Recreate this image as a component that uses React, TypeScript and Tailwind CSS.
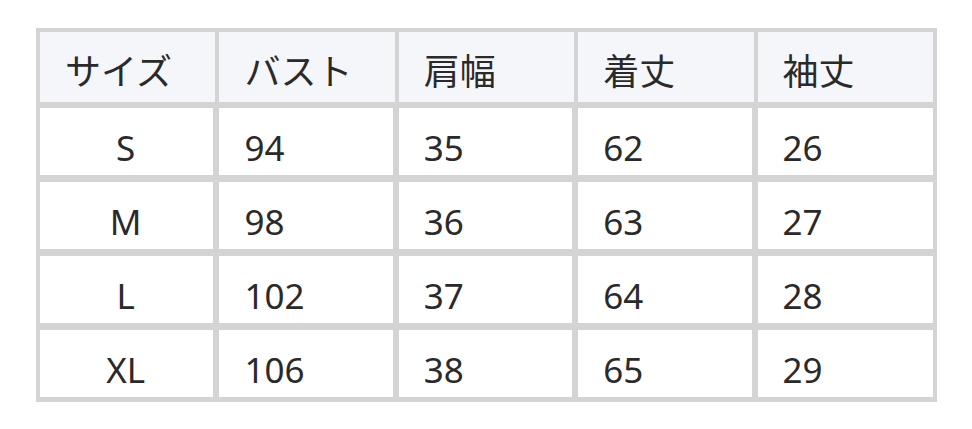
import React from "react";

const headers = ["サイズ", "バスト", "肩幅", "着丈", "袖丈"];
const rows = [
  ["S", "94", "35", "62", "26"],
  ["M", "98", "36", "63", "27"],
  ["L", "102", "37", "64", "28"],
  ["XL", "106", "38", "65", "29"],
];

export default function App() {
  return (
    <div className="w-[972px] h-[429px] bg-white pt-[28px] pl-[36px]" style={{ fontFamily: '"Noto Sans", "Noto Sans CJK JP", sans-serif' }}>
      <div className="w-[901px] grid grid-cols-5 gap-[4px] p-[4px] bg-[#d4d4d4] text-[#2a2a2a]">
        {headers.map((h) => (
          <div key={h} className="h-[70px] bg-[#f5f6fa] flex items-center pl-[25px] pt-[10px] text-[36px] leading-none">
            {h}
          </div>
        ))}
        {rows.map((r, ri) =>
          r.map((c, ci) => (
            <div
              key={ri + "-" + ci}
              className={
                "h-[70px] bg-white flex items-center pt-[11px] text-[35px] leading-none border-t-[2px] border-b-[1px] border-[#d4d4d4] " +
                (ci < 4 ? "border-r-[2px] " : "") +
                (ci === 0 ? "justify-center pr-[2px]" : "pl-[25px]")
              }
            >
              {c}
            </div>
          ))
        )}
      </div>
    </div>
  );
}
